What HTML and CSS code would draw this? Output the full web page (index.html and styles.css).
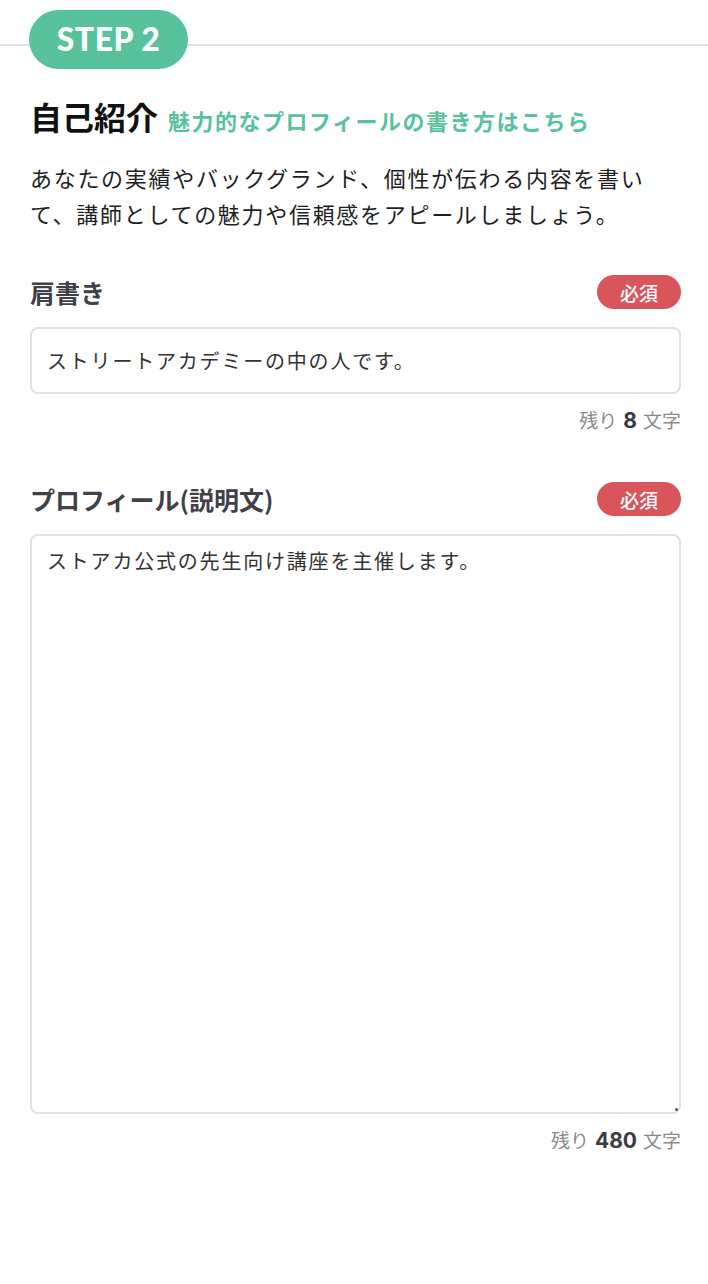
FILE: index.html
```html
<!DOCTYPE html>
<html lang="ja">
<head>
<meta charset="utf-8">
<title>STEP 2 自己紹介</title>
<link rel="stylesheet" href="styles.css">
</head>
<body>
<div class="step-header">
  <div class="step-line"></div>
  <div class="step-pill">STEP 2</div>
</div>
<main class="content">
  <div class="title-row">
    <h2 class="title">自己紹介</h2>
    <a class="title-link" href="#">魅力的なプロフィールの書き方はこちら</a>
  </div>
  <p class="lead">あなたの実績やバックグランド、個性が伝わる内容を書いて、講師としての魅力や信頼感をアピールしましょう。</p>

  <section class="field field-first">
    <div class="field-head">
      <span class="field-label">肩書き</span>
      <span class="badge">必須</span>
    </div>
    <div class="input">ストリートアカデミーの中の人です。</div>
    <div class="counter">残り<b class="num">8</b>文字</div>
  </section>

  <section class="field">
    <div class="field-head">
      <span class="field-label">プロフィール(説明文)</span>
      <span class="badge">必須</span>
    </div>
    <div class="textarea">ストアカ公式の先生向け講座を主催します。</div>
    <div class="counter">残り<b class="num">480</b>文字</div>
  </section>
</main>
</body>
</html>
```
FILE: styles.css
```css
* { box-sizing: border-box; }
html, body { margin: 0; padding: 0; background: #fff; }
body {
  font-family: "Noto Sans CJK JP", "Noto Sans", sans-serif;
  color: #222;
  width: 708px;
}

.step-header {
  display: grid;
  height: 69px;
}
.step-line, .step-pill { grid-area: 1 / 1; }
.step-line {
  align-self: start;
  margin-top: 44px;
  height: 2px;
  background: #e0e0e0;
}
.step-pill {
  align-self: start;
  justify-self: start;
  margin-top: 10px;
  margin-left: 29px;
  width: 159px;
  height: 59px;
  border-radius: 30px;
  background: #58c29d;
  color: #fff;
  font-family: "Lato", "Noto Sans", sans-serif;
  font-weight: 900;
  font-size: 32px;
  letter-spacing: 0.5px;
  display: flex;
  align-items: center;
  justify-content: center;
  padding-bottom: 2px;
}

.content { padding: 0 28px 0 30px; }

.title-row {
  display: flex;
  align-items: baseline;
  gap: 10px;
  margin-top: 27px;
  height: 40px;
}
.title {
  margin: 0;
  font-size: 32px;
  line-height: 40px;
  font-weight: 700;
  color: #111;
}
.title-link {
  font-size: 22px;
  font-weight: 700;
  letter-spacing: 1.5px;
  color: #58c29d;
  text-decoration: none;
}

.lead {
  margin: 23px 0 0;
  font-size: 22px;
  line-height: 36px;
  letter-spacing: 1.7px;
  color: #1e1e1e;
  width: 650px;
}

.field { margin-top: 49px; }
.field-first { margin-top: 44px; }
.field-head {
  display: flex;
  justify-content: space-between;
  align-items: center;
  height: 34px;
  width: 651px;
}
.field-label {
  font-size: 25px;
  font-weight: 700;
  color: #404048;
}
.badge {
  width: 84px;
  height: 34px;
  border-radius: 17px;
  background: #d9555c;
  color: #fff;
  font-size: 19px;
  font-weight: 500;
  display: flex;
  align-items: center;
  justify-content: center;
}

.input, .textarea {
  margin-top: 18px;
  width: 651px;
  border: 2px solid #e0e0e0;
  border-radius: 8px;
  background: #fff;
  font-size: 20px;
  letter-spacing: 1.8px;
  color: #333;
  padding-left: 15px;
}
.input {
  height: 67px;
  display: flex;
  align-items: center;
}
.textarea {
  position: relative;
  height: 580px;
  padding-top: 10px;
  line-height: 30px;
}
.textarea::after {
  content: "";
  position: absolute;
  right: 1px;
  bottom: 1px;
  width: 3px;
  height: 3px;
  border-radius: 50%;
  background: #555;
}

.counter {
  margin-top: 14px;
  width: 651px;
  text-align: right;
  font-size: 19px;
  line-height: 24px;
  color: #8a8a8a;
}
.num {
  font-family: "Inter", "Liberation Sans", sans-serif;
  font-weight: 700;
  font-size: 21px;
  color: #3a3a44;
  margin: 0 6px;
}
```
